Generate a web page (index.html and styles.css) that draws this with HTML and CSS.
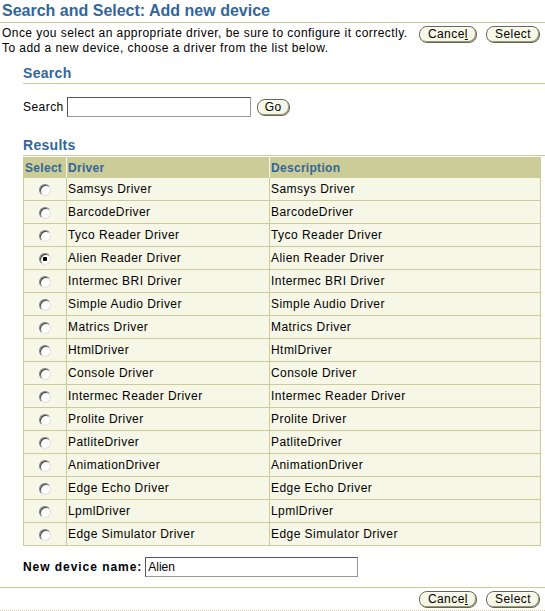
FILE: index.html
```html
<!DOCTYPE html>
<html lang="en">
<head>
  <title>Search and Select: Add new device</title>
  <link rel="stylesheet" href="styles.css">
</head>
<body>
  <h1 class="title">Search and Select: Add new device</h1>
  <div class="intro">
    <div class="intro-text">
      Once you select an appropriate driver, be sure to configure it correctly.<br/>
      To add a new device, choose a driver from the list below.
    </div>
    <div class="btns">
      <button class="btn">Cance<u>l</u></button>
      <button class="btn">Select</button>
    </div>
  </div>

  <div class="content">
    <h2 class="section">Search</h2>
    <div class="search-row">
      <label for="q">Search</label>
      <input type="text" id="q" class="field search-field">
      <button class="btn">Go</button>
    </div>

    <h2 class="section">Results</h2>
    <table class="results">
      <thead>
        <tr><th class="col-sel">Select</th><th class="col-drv">Driver</th><th>Description</th></tr>
      </thead>
      <tbody>
        <tr><td class="sel"><input type="radio" name="drv"></td><td>Samsys Driver</td><td>Samsys Driver</td></tr>
        <tr><td class="sel"><input type="radio" name="drv"></td><td>BarcodeDriver</td><td>BarcodeDriver</td></tr>
        <tr><td class="sel"><input type="radio" name="drv"></td><td>Tyco Reader Driver</td><td>Tyco Reader Driver</td></tr>
        <tr><td class="sel"><input type="radio" name="drv" checked></td><td>Alien Reader Driver</td><td>Alien Reader Driver</td></tr>
        <tr><td class="sel"><input type="radio" name="drv"></td><td>Intermec BRI Driver</td><td>Intermec BRI Driver</td></tr>
        <tr><td class="sel"><input type="radio" name="drv"></td><td>Simple Audio Driver</td><td>Simple Audio Driver</td></tr>
        <tr><td class="sel"><input type="radio" name="drv"></td><td>Matrics Driver</td><td>Matrics Driver</td></tr>
        <tr><td class="sel"><input type="radio" name="drv"></td><td>HtmlDriver</td><td>HtmlDriver</td></tr>
        <tr><td class="sel"><input type="radio" name="drv"></td><td>Console Driver</td><td>Console Driver</td></tr>
        <tr><td class="sel"><input type="radio" name="drv"></td><td>Intermec Reader Driver</td><td>Intermec Reader Driver</td></tr>
        <tr><td class="sel"><input type="radio" name="drv"></td><td>Prolite Driver</td><td>Prolite Driver</td></tr>
        <tr><td class="sel"><input type="radio" name="drv"></td><td>PatliteDriver</td><td>PatliteDriver</td></tr>
        <tr><td class="sel"><input type="radio" name="drv"></td><td>AnimationDriver</td><td>AnimationDriver</td></tr>
        <tr><td class="sel"><input type="radio" name="drv"></td><td>Edge Echo Driver</td><td>Edge Echo Driver</td></tr>
        <tr><td class="sel"><input type="radio" name="drv"></td><td>LpmlDriver</td><td>LpmlDriver</td></tr>
        <tr><td class="sel"><input type="radio" name="drv"></td><td>Edge Simulator Driver</td><td>Edge Simulator Driver</td></tr>
      </tbody>
    </table>

    <div class="name-row">
      <label for="devname">New device name:</label>
      <input type="text" id="devname" class="field name-field" value="Alien">
    </div>
  </div>

  <div class="footer">
    <button class="btn">Cance<u>l</u></button>
    <button class="btn">Select</button>
  </div>
</body>
</html>
```

FILE: styles.css
```css
html, body {
  margin: 0;
}
body {
  font-family: "Liberation Sans", Arial, sans-serif;
  font-size: 12px;
  letter-spacing: 0.45px;
  color: #000;
  background: #fff;
}
.title {
  margin: 0;
  padding: 2px 0 2px 2px;
  font-size: 16px;
  line-height: 18px;
  font-weight: bold;
  letter-spacing: 0;
  color: #336699;
  border-bottom: 1px solid #cccc99;
}
.intro {
  display: flex;
  justify-content: space-between;
  align-items: flex-start;
  padding: 3px 5px 0 2px;
}
.intro-text {
  line-height: 15px;
}
.btns {
  display: flex;
  gap: 9px;
}
.btn {
  font-family: "Liberation Sans", Arial, sans-serif;
  font-size: 12px;
  letter-spacing: 0.45px;
  line-height: 13px;
  height: 17px;
  padding: 0 8px;
  background: #f7f7e7;
  color: #000;
  border: 1px solid #666655;
  border-radius: 8px;
  box-shadow: inset -1px -1px 0 #999977, inset 1px 1px 0 #ffffff;
}
.btn u {
  text-decoration: underline;
}
.content {
  padding-left: 23px;
}
.section {
  margin: 0;
  font-size: 14px;
  line-height: 16px;
  font-weight: bold;
  letter-spacing: 0.3px;
  color: #336699;
  border-bottom: 1px solid #cccc99;
  padding-bottom: 2px;
}
.content .section:first-child {
  margin-top: 9px;
}
.search-row {
  display: flex;
  align-items: center;
  gap: 3px;
  margin: 13px 0 20px 0;
}
.search-row .btn {
  margin-left: 3px;
  padding: 0 7px;
}
.field {
  font-family: "Liberation Sans", Arial, sans-serif;
  font-size: 12px;
  height: 20px;
  box-sizing: border-box;
  padding: 0 2px;
  border: 1px solid #999;
  border-top-color: #555;
  border-left-color: #555;
  background: #fff;
}
.search-field {
  width: 184px;
}
.results {
  border-collapse: collapse;
  width: 518px;
  margin-top: 1px;
  border: 1px solid #cccc99;
}
.results th {
  background: #cccc99;
  color: #336699;
  font-weight: bold;
  letter-spacing: 0.3px;
  text-align: left;
  height: 19px;
  padding: 0 1px;
  border-left: 1px solid #f7f7e7;
}
.results th:first-child {
  border-left: none;
}
.results td {
  background: #f7f7e7;
  height: 22px;
  padding: 0 1px;
  border: 1px solid #cccc99;
}
.col-sel {
  width: 40px;
}
.col-drv {
  width: 200px;
}
.results td.sel {
  text-align: center;
}
.results input[type="radio"] {
  appearance: none;
  width: 12px;
  height: 12px;
  margin: 0;
  vertical-align: middle;
  border-radius: 50%;
  border: 1px solid #808080;
  border-right-color: #e0e0e0;
  border-bottom-color: #e0e0e0;
  background: #fff;
  box-shadow: inset 1px 1px 0 #404040;
}
.results input[type="radio"]:checked {
  background: radial-gradient(circle, #000 0, #000 2px, #fff 2.5px);
}
.name-row {
  display: flex;
  align-items: center;
  gap: 3px;
  margin: 11px 0 10px 0;
}
.name-row label {
  font-weight: bold;
  letter-spacing: 0.95px;
}
.name-field {
  width: 213px;
}
.footer {
  display: flex;
  justify-content: flex-end;
  gap: 9px;
  padding: 3px 5px 2px 0;
  border-top: 1px solid #cccc99;
  border-bottom: 1px dotted #cccc99;
}
```
